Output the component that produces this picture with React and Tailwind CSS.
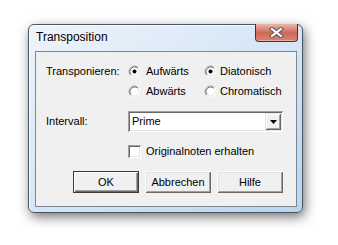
import React from "react";

function Radio({ checked }) {
  return (
    <svg width="13" height="13" viewBox="0 0 13 13" className="shrink-0">
      <circle cx="6.5" cy="6.5" r="5.5" fill="#fff" />
      <path d="M2.61 10.39 A5.5 5.5 0 0 1 10.39 2.61" fill="none" stroke="#a0a0a0" strokeWidth="1" />
      <path d="M10.39 2.61 A5.5 5.5 0 0 1 2.61 10.39" fill="none" stroke="#ffffff" strokeWidth="1" />
      <path d="M3.32 9.68 A4.5 4.5 0 0 1 9.68 3.32" fill="none" stroke="#696969" strokeWidth="1" />
      <path d="M9.68 3.32 A4.5 4.5 0 0 1 3.32 9.68" fill="none" stroke="#e3e3e3" strokeWidth="1" />
      {checked && <circle cx="6.5" cy="6.5" r="2" fill="#000" />}
    </svg>
  );
}

function Btn({ children, isDefault }) {
  const base =
    "w-[66px] h-[22px] flex items-center justify-center bg-[#f0f0f0] text-[11px] text-black";
  if (isDefault) {
    return (
      <div className={`${base} border border-[#3a3a3a] shadow-[inset_1px_1px_0_#fff,inset_-1px_-1px_0_#696969,inset_-2px_-2px_0_#a0a0a0]`}>
        {children}
      </div>
    );
  }
  return (
    <div className={`${base} shadow-[inset_1px_1px_0_#fff,inset_-1px_-1px_0_#696969,inset_2px_2px_0_#e3e3e3,inset_-2px_-2px_0_#a0a0a0]`}>
      {children}
    </div>
  );
}

export default function App() {
  return (
    <div className="w-[338px] h-[245px] bg-white pl-[28px] pt-[24px] font-['Liberation_Sans',Arial,sans-serif]">
      <div className="w-[275px] h-[189px] rounded-[6px] border border-[#4a5560] bg-gradient-to-br from-[#eef4fb] via-[#d6e6f6] to-[#b6d6f0] pl-[6px] pr-[5px] shadow-[2px_4px_12px_rgba(0,0,0,0.55),inset_1px_1px_0_rgba(255,255,255,0.8)]">
        {/* title bar */}
        <div className="h-[26px] flex justify-between items-start">
          <span className="pl-[1px] pt-[5px] text-[12px] leading-[15px] text-black">
            Transposition
          </span>
          <div className="mt-[-1px] mr-[-1px] w-[43px] h-[18px] rounded-b-[4px] border border-t-0 border-[#5c2a22] bg-gradient-to-b from-[#eab8ab] via-[#cf6a58] to-[#d9826e] flex items-center justify-center shadow-[inset_0_-1px_0_rgba(255,255,255,0.35)]">
            <svg width="15" height="11" viewBox="0 0 15 11">
              <path d="M3 2 L12 9 M12 2 L3 9" stroke="#5a5a5a" strokeWidth="4.2" strokeLinecap="square" />
              <path d="M3 2 L12 9 M12 2 L3 9" stroke="#ffffff" strokeWidth="2.2" strokeLinecap="square" />
            </svg>
          </div>
        </div>

        {/* client area */}
        <div className="w-[262px] h-[156px] border border-[#7c8794] bg-[#f0f0f0] pl-[10px] pt-[9px] text-[11px] text-black">
          <div className="flex">
            <div className="w-[82px] h-[20px] flex items-center">Transponieren:</div>
            <div className="flex flex-col">
              <div className="flex h-[20px] items-center">
                <div className="w-[76px] flex items-center gap-[5px]">
                  <Radio checked />
                  <span>Aufwärts</span>
                </div>
                <div className="flex items-center gap-[3px]">
                  <Radio checked />
                  <span>Diatonisch</span>
                </div>
              </div>
              <div className="flex h-[20px] items-center">
                <div className="w-[76px] flex items-center gap-[5px]">
                  <Radio />
                  <span>Abwärts</span>
                </div>
                <div className="flex items-center gap-[3px]">
                  <Radio />
                  <span>Chromatisch</span>
                </div>
              </div>
            </div>
          </div>

          <div className="flex mt-[10px] items-center">
            <div className="w-[82px]">Intervall:</div>
            <div className="w-[155px] h-[21px] bg-white flex items-stretch p-[2px] shadow-[inset_1px_1px_0_#a0a0a0,inset_-1px_-1px_0_#fff,inset_2px_2px_0_#696969,inset_-2px_-2px_0_#e3e3e3]">
              <div className="flex-1 flex items-center pl-[2px]">Prime</div>
              <div className="w-[16px] bg-[#f0f0f0] flex items-center justify-center shadow-[inset_1px_1px_0_#e3e3e3,inset_-1px_-1px_0_#696969,inset_2px_2px_0_#fff,inset_-2px_-2px_0_#a0a0a0]">
                <svg width="7" height="4" viewBox="0 0 7 4">
                  <path d="M0 0 H7 L3.5 4 Z" fill="#000" />
                </svg>
              </div>
            </div>
          </div>

          <div className="flex mt-[9px] h-[20px] items-center">
            <div className="w-[82px]" />
            <div className="w-[13px] h-[13px] bg-white shadow-[inset_1px_1px_0_#a0a0a0,inset_-1px_-1px_0_#fff,inset_2px_2px_0_#696969,inset_-2px_-2px_0_#e3e3e3]" />
            <span className="ml-[5px]">Originalnoten erhalten</span>
          </div>

          <div className="flex mt-[10px] ml-[27px] gap-[6px]">
            <Btn isDefault>OK</Btn>
            <Btn>Abbrechen</Btn>
            <Btn>Hilfe</Btn>
          </div>
        </div>
      </div>
    </div>
  );
}
